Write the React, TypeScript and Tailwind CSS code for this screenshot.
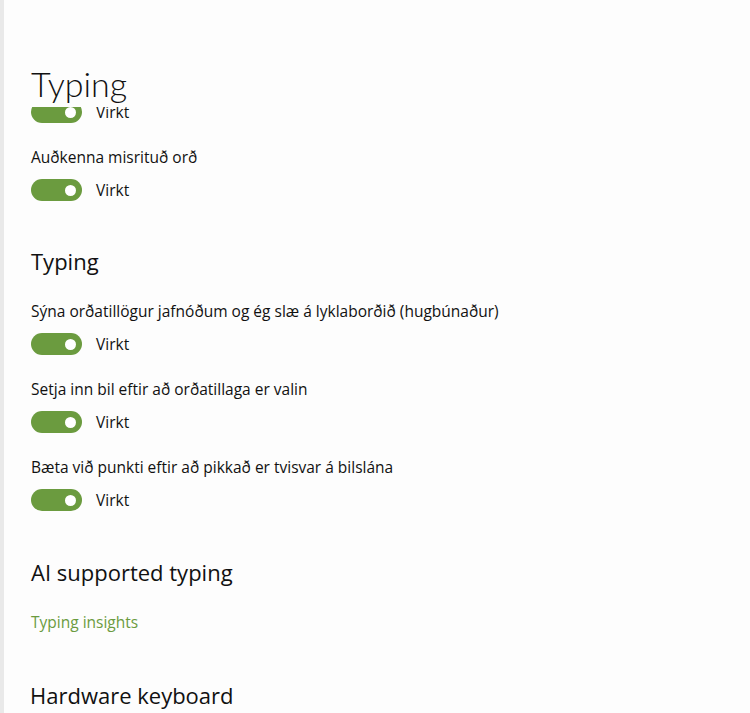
const font = { fontFamily: '"Segoe UI", "Open Sans", "Noto Sans", sans-serif' };

const Toggle = ({ className = "" }: { className?: string }) => (
  <div className={`flex items-center gap-[14px] ${className}`}>
    <div className="flex h-[22px] w-[51px] items-center justify-end rounded-full bg-[#6b9b3f] pr-[6px]">
      <div className="h-[11px] w-[11px] rounded-full bg-white" />
    </div>
    <span className="text-[15.5px] leading-[20px] text-[#111]">Virkt</span>
  </div>
);

const Setting = ({ label, className = "" }: { label: string; className?: string }) => (
  <div className={className}>
    <p className="text-[15.5px] leading-[20px] text-[#111]">{label}</p>
    <Toggle className="mt-[12px]" />
  </div>
);

const App = () => {
  return (
    <div className="flex h-[713px] w-[750px] overflow-hidden bg-[#fdfdfd]" style={font}>
      {/* left border strip */}
      <div className="w-[4px] shrink-0 bg-[#e9e9e9]" />

      <div className="flex flex-1 flex-col">
        {/* Page title */}
        <div className="h-[107px] shrink-0 pl-[27px] pt-[64px]">
          <h1 className="font-['Lato',sans-serif] text-[34px] font-light leading-[40px] text-[#111]">Typing</h1>
        </div>

        {/* Scrolled content */}
        <div className="flex-1 overflow-hidden pl-[27px]">
          <Toggle className="mt-[-6px]" />

          <Setting label="Auðkenna misrituð orð" className="mt-[24px]" />

          <h2 className="mt-[46px] text-[22px] leading-[28px] text-[#111]">Typing</h2>

          <Setting
            label="Sýna orðatillögur jafnóðum og ég slæ á lyklaborðið (hugbúnaður)"
            className="mt-[26px]"
          />
          <Setting label="Setja inn bil eftir að orðatillaga er valin" className="mt-[24px]" />
          <Setting label="Bæta við punkti eftir að pikkað er tvisvar á bilslána" className="mt-[24px]" />

          <h2 className="mt-[47px] text-[22px] leading-[28px] text-[#111]">AI supported typing</h2>

          <p className="mt-[26px] text-[15.5px] leading-[20px] text-[#6b9b3f]">Typing insights</p>

          <h2 className="ml-[-1px] mt-[49px] text-[22px] leading-[28px] text-[#111]">Hardware keyboard</h2>
        </div>
      </div>
    </div>
  );
};

export default App;
